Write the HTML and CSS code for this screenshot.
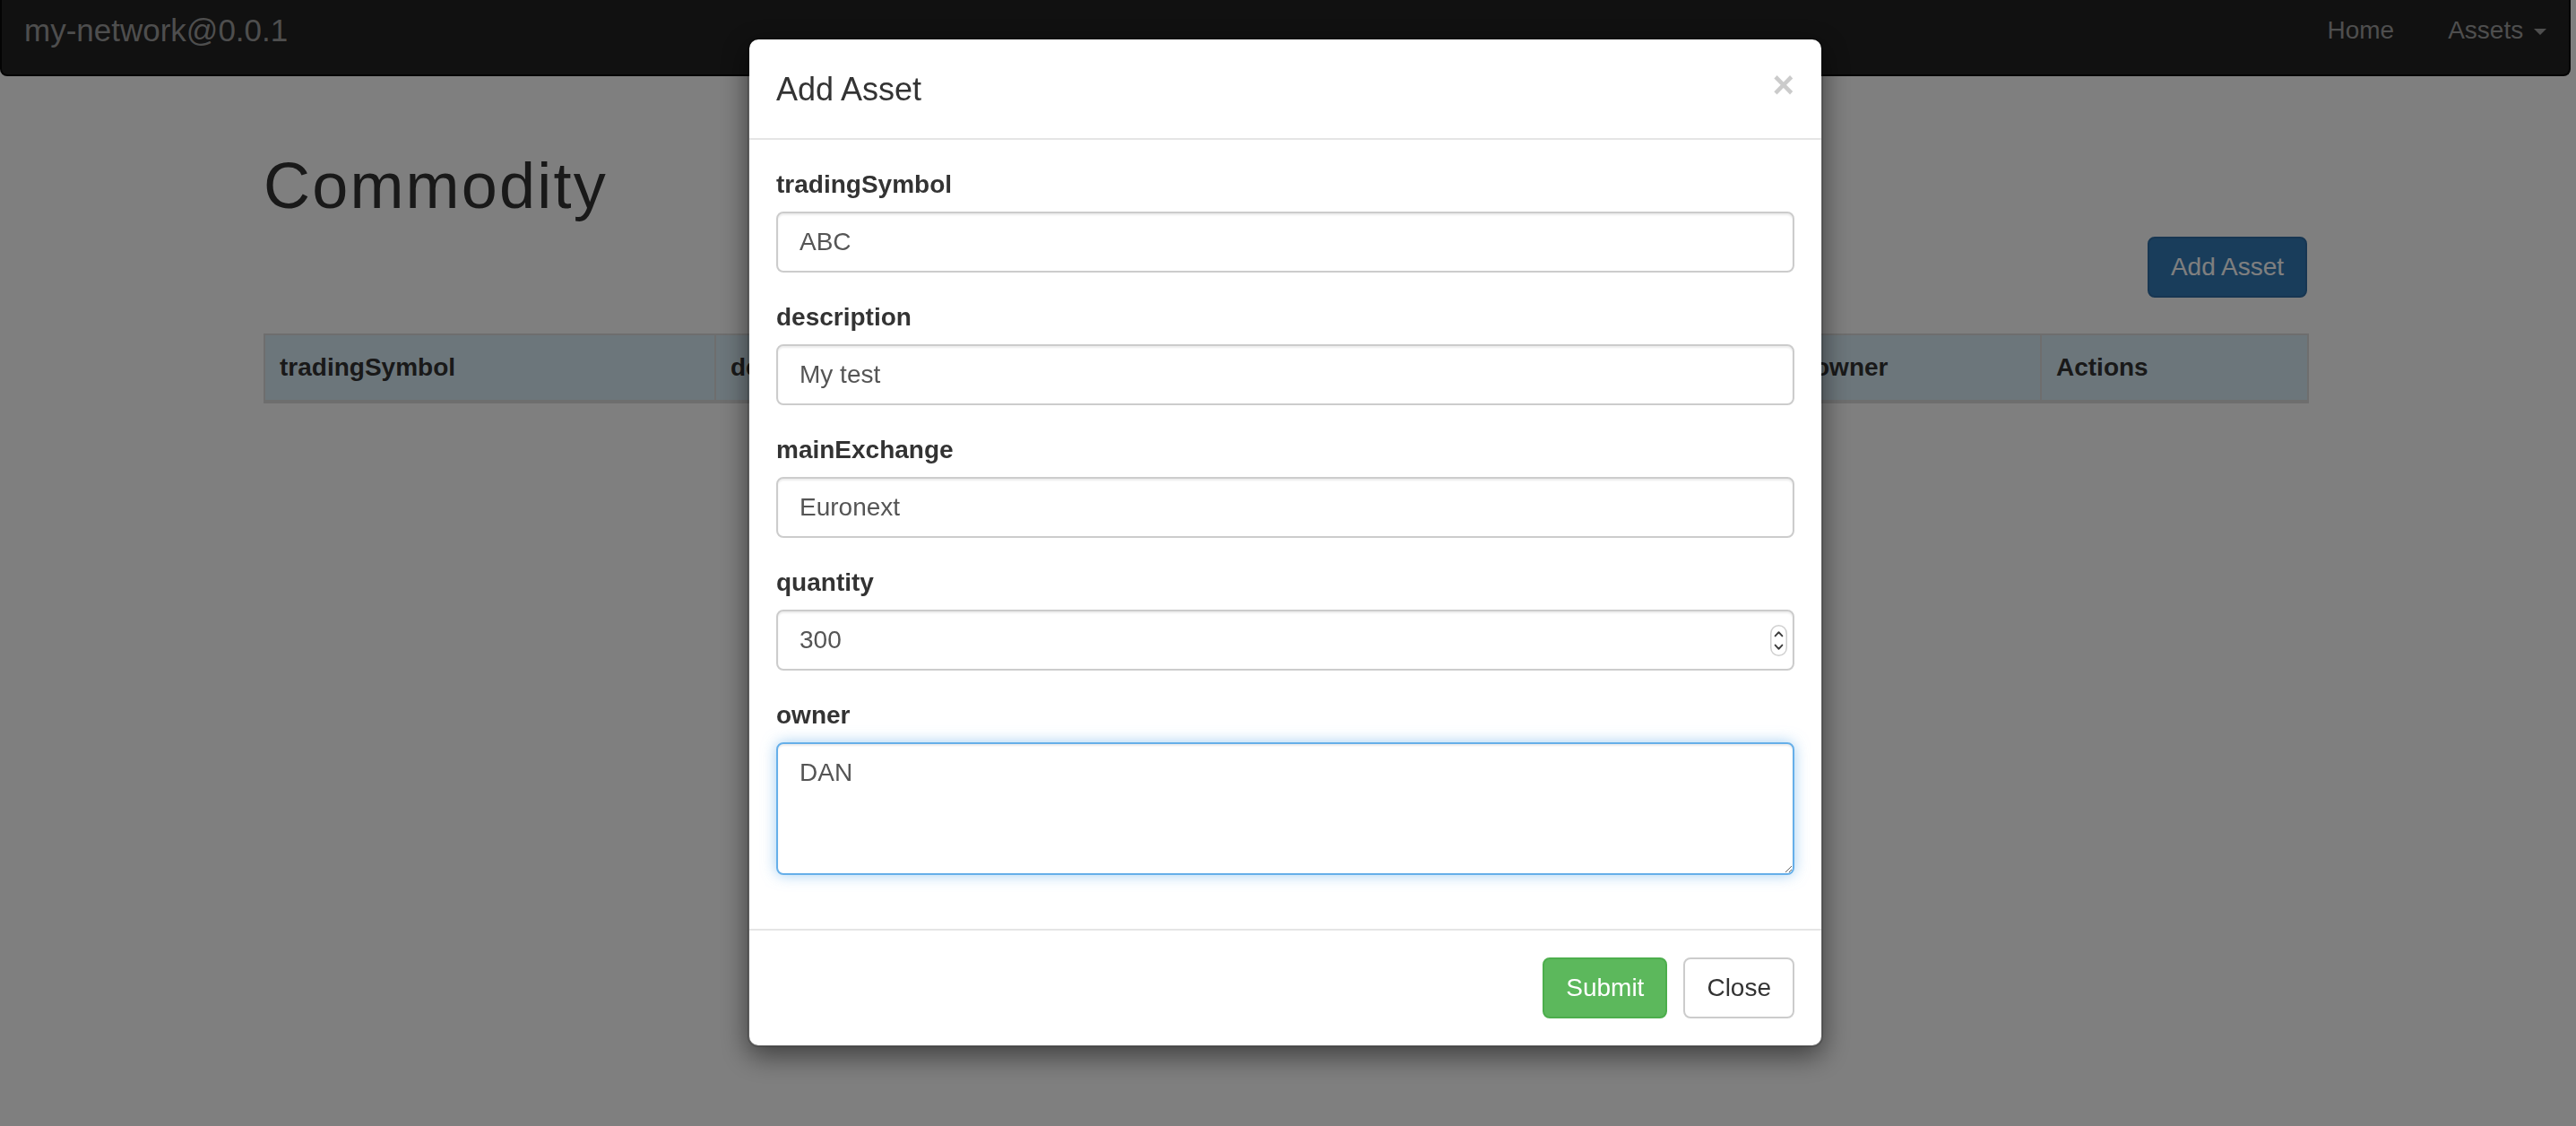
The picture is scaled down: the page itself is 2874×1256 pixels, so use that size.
FILE: index.html
```html
<!DOCTYPE html>
<html lang="en">
<head>
<meta charset="utf-8">
<title>my-network@0.0.1</title>
<link rel="stylesheet" href="styles.css">
</head>
<body>
  <nav class="navbar">
    <a class="brand" href="#">my-network@0.0.1</a>
    <ul class="nav">
      <li><a class="nav-link" href="#">Home</a></li>
      <li><a class="nav-link" href="#">Assets <span class="caret"></span></a></li>
    </ul>
  </nav>

  <main class="container">
    <h1 class="page-title">Commodity</h1>
    <div class="toolbar">
      <button class="btn btn-primary" type="button">Add Asset</button>
    </div>
    <table class="table">
      <colgroup>
        <col class="col-symbol">
        <col class="col-desc">
        <col class="col-exchange">
        <col class="col-qty">
        <col class="col-owner">
        <col class="col-actions">
      </colgroup>
      <thead>
        <tr>
          <th>tradingSymbol</th>
          <th>description</th>
          <th>mainExchange</th>
          <th>quantity</th>
          <th>owner</th>
          <th>Actions</th>
        </tr>
      </thead>
    </table>
  </main>

  <div class="backdrop"></div>

  <div class="modal">
    <div class="modal-dialog">
      <div class="modal-content">
        <div class="modal-header">
          <h4 class="modal-title">Add Asset</h4>
          <button class="close" type="button">&times;</button>
        </div>
        <div class="modal-body">
          <form>
            <div class="form-group">
              <label for="f-symbol">tradingSymbol</label>
              <input id="f-symbol" class="form-control" type="text" value="ABC">
            </div>
            <div class="form-group">
              <label for="f-desc">description</label>
              <input id="f-desc" class="form-control" type="text" value="My test">
            </div>
            <div class="form-group">
              <label for="f-exchange">mainExchange</label>
              <input id="f-exchange" class="form-control" type="text" value="Euronext">
            </div>
            <div class="form-group">
              <label for="f-qty">quantity</label>
              <div class="number-wrap">
                <input id="f-qty" class="form-control" type="number" value="300">
                <svg class="spinner" viewBox="0 0 19 35" width="19" height="35" aria-hidden="true">
                  <rect x="0.75" y="0.75" width="17.5" height="33.5" rx="8.75" fill="#fff" stroke="#cfcfcf" stroke-width="1.5"/>
                  <path d="M5.6 12.4 L9.5 8.2 L13.4 12.4" fill="none" stroke="#3c3c3c" stroke-width="1.9" stroke-linecap="round" stroke-linejoin="round"/>
                  <path d="M5.6 22.6 L9.5 26.8 L13.4 22.6" fill="none" stroke="#3c3c3c" stroke-width="1.9" stroke-linecap="round" stroke-linejoin="round"/>
                </svg>
              </div>
            </div>
            <div class="form-group">
              <label for="f-owner">owner</label>
              <textarea id="f-owner" class="form-control is-focused" rows="3">DAN</textarea>
            </div>
          </form>
        </div>
        <div class="modal-footer">
          <button class="btn btn-success" type="button">Submit</button>
          <button class="btn btn-default" type="button">Close</button>
        </div>
      </div>
    </div>
  </div>
</body>
</html>
```

FILE: styles.css
```css
* {
  box-sizing: border-box;
}

html,
body {
  margin: 0;
  height: 100%;
}

body {
  font-family: "Liberation Sans", Arial, Helvetica, sans-serif;
  font-size: 28px;
  line-height: 40px;
  color: #333;
  background: #fff;
  padding-right: 6px;
  overflow: hidden;
}

/* ---------- navbar ---------- */
.navbar {
  height: 85px;
  background: #222;
  border: 2px solid #080808;
  border-top: 0;
  border-radius: 0 0 8px 8px;
  display: flex;
  justify-content: space-between;
  align-items: flex-start;
  padding-right: 25px;
}

.brand {
  display: block;
  padding: 9px 0 0 25px;
  font-size: 35px;
  line-height: 50px;
  color: #9d9d9d;
  text-decoration: none;
}

.nav {
  display: flex;
  list-style: none;
  margin: 0;
  padding: 14px 0 0;
}

.nav-link {
  display: block;
  padding: 0 30px;
  color: #9d9d9d;
  text-decoration: none;
}

.nav li:last-child .nav-link {
  padding-right: 0;
}

.caret {
  display: inline-block;
  width: 0;
  height: 0;
  margin-left: 4px;
  vertical-align: middle;
  border-top: 7px solid;
  border-left: 7px solid transparent;
  border-right: 7px solid transparent;
}

/* ---------- page ---------- */
.container {
  width: 2280px;
  margin: 0 auto;
}

.page-title {
  margin: 83px 0 0;
  font-size: 72px;
  line-height: 79px;
  font-weight: 500;
  letter-spacing: 2.2px;
  color: #333;
}

.toolbar {
  display: flex;
  justify-content: flex-end;
  margin-top: 17px;
}

.btn {
  display: inline-block;
  padding: 12px 24px;
  font-family: inherit;
  font-size: 28px;
  line-height: 40px;
  border: 2px solid transparent;
  border-radius: 8px;
  cursor: pointer;
  white-space: nowrap;
}

.btn-primary {
  color: #fff;
  background: #337ab7;
  border-color: #2e6da4;
}

.btn-success {
  color: #fff;
  background: #5cb85c;
  border-color: #4cae4c;
}

.btn-default {
  color: #333;
  background: #fff;
  border-color: #ccc;
}

.table {
  width: 100%;
  margin-top: 40px;
  border-collapse: collapse;
  table-layout: fixed;
}

.col-symbol { width: 503px; }
.col-desc { width: 403px; }
.col-exchange { width: 403px; }
.col-qty { width: 403px; }
.col-owner { width: 270px; }
.col-actions { width: 298px; }

.table th {
  padding: 16px;
  text-align: left;
  font-weight: bold;
  line-height: 40px;
  background: #d9edf7;
  border: 2px solid #ddd;
  border-bottom-width: 4px;
  white-space: nowrap;
  overflow: hidden;
}

/* ---------- modal ---------- */
.backdrop {
  position: fixed;
  inset: 0;
  background: rgba(0, 0, 0, 0.5);
}

.modal {
  position: fixed;
  top: 0;
  left: 0;
  right: 6px;
  bottom: 0;
}

.modal-dialog {
  width: 1200px;
  margin: 42px auto 0;
}

.modal-content {
  background: #fff;
  background-clip: padding-box;
  border: 2px solid rgba(0, 0, 0, 0.2);
  border-radius: 12px;
  box-shadow: 0 10px 30px rgba(0, 0, 0, 0.5);
}

.modal-header {
  display: flex;
  justify-content: space-between;
  align-items: flex-start;
  padding: 30px 30px 29px;
  border-bottom: 2px solid #e5e5e5;
}

.modal-title {
  margin: 0;
  font-size: 36px;
  line-height: 51px;
  font-weight: 500;
  color: #333;
}

.close {
  padding: 0;
  margin: 0;
  background: none;
  border: 0;
  font-family: inherit;
  font-size: 42px;
  line-height: 42px;
  font-weight: bold;
  color: #000;
  opacity: 0.2;
}

.modal-body {
  padding: 30px;
}

.form-group {
  margin-bottom: 30px;
}

.form-group label {
  display: inline-block;
  margin-bottom: 10px;
  font-weight: bold;
  color: #333;
}

.form-control {
  display: block;
  width: 100%;
  height: 68px;
  padding: 12px 24px;
  font-family: inherit;
  font-size: 28px;
  line-height: 40px;
  color: #555;
  background: #fff;
  border: 2px solid #ccc;
  border-radius: 8px;
  box-shadow: inset 0 2px 2px rgba(0, 0, 0, 0.075);
  outline: none;
}

textarea.form-control {
  height: 148px;
  resize: vertical;
}

.form-control.is-focused {
  border-color: #66afe9;
  box-shadow: inset 0 2px 2px rgba(0, 0, 0, 0.075), 0 0 16px rgba(102, 175, 233, 0.6);
}

input[type="number"] {
  -moz-appearance: textfield;
}

input[type="number"]::-webkit-inner-spin-button,
input[type="number"]::-webkit-outer-spin-button {
  -webkit-appearance: none;
  margin: 0;
}

.number-wrap {
  position: relative;
}

.spinner {
  position: absolute;
  right: 8px;
  top: 17px;
  pointer-events: none;
}

.modal-footer {
  display: flex;
  justify-content: flex-end;
  gap: 18px;
  padding: 30px;
  border-top: 2px solid #e5e5e5;
}
```
